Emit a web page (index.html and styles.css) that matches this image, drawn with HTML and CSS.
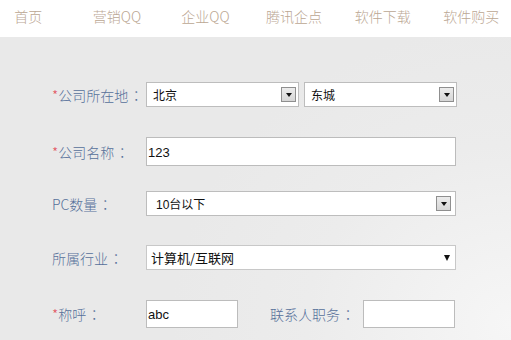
FILE: index.html
```html
<!DOCTYPE html>
<html lang="zh-CN">
<head>
<meta charset="utf-8">
<title>企业信息</title>
<link rel="stylesheet" href="styles.css">
</head>
<body>
<header class="top">
  <nav class="nav">
    <a class="nav-item">首页</a>
    <a class="nav-item">营销QQ</a>
    <a class="nav-item">企业QQ</a>
    <a class="nav-item">腾讯企点</a>
    <a class="nav-item">软件下载</a>
    <a class="nav-item">软件购买</a>
  </nav>
</header>
<main class="stage">
  <form class="form">
    <div class="row row-1">
      <label class="label"><span class="req">*</span>公司所在地<span class="colon">：</span></label>
      <div class="sel sel-half"><span class="sel-text">北京</span><span class="sel-btn"><span class="tri"></span></span></div>
      <div class="sel sel-half sel-second"><span class="sel-text">东城</span><span class="sel-btn"><span class="tri"></span></span></div>
    </div>
    <div class="row row-2">
      <label class="label"><span class="req">*</span>公司名称<span class="colon">：</span></label>
      <div class="inp inp-full"><span class="inp-text">123</span></div>
    </div>
    <div class="row row-3">
      <label class="label">PC数量<span class="colon">：</span></label>
      <div class="sel sel-full"><span class="sel-text sel-text-wide">10台以下</span><span class="sel-btn sel-btn-r"><span class="tri"></span></span></div>
    </div>
    <div class="row row-4">
      <label class="label">所属行业<span class="colon">：</span></label>
      <div class="msel"><span class="msel-text">计算机/互联网</span><span class="msel-arrow"></span></div>
    </div>
    <div class="row row-5">
      <label class="label"><span class="req">*</span>称呼<span class="colon">：</span></label>
      <div class="inp inp-small"><span class="inp-text">abc</span></div>
      <label class="label label-mid">联系人职务<span class="colon">：</span></label>
      <div class="inp inp-small"></div>
    </div>
  </form>
</main>
</body>
</html>
```
FILE: styles.css
```css
* { box-sizing: border-box; }
html, body { margin: 0; padding: 0; }
body {
  width: 511px;
  height: 340px;
  overflow: hidden;
  font-family: "Noto Sans CJK SC", "Liberation Sans", sans-serif;
  background: #e9e9e9;
}
.top {
  height: 37px;
  background: #ffffff;
}
.nav {
  display: grid;
  grid-template-columns: repeat(6, 88.6px);
  margin-left: -16px;
  height: 37px;
  align-items: center;
}
.nav-item {
  text-align: center;
  font-size: 14px;
  font-weight: 300;
  color: #bba793;
  line-height: 20px;
  padding-bottom: 5px;
}
.stage {
  height: 303px;
  background: radial-gradient(ellipse 340px 300px at 100% 95%, #f6f6f6 0%, #ececec 60%, #e9e9e9 100%);
  padding: 45px 0 0 52px;
}
.form { display: flex; flex-direction: column; }
.row { display: flex; align-items: center; }
.row-1 { height: 25px; }
.row-2 { height: 29px; margin-top: 30px; }
.row-3 { height: 25px; margin-top: 25px; }
.row-4 { height: 25px; margin-top: 29px; }
.row-5 { height: 28px; margin-top: 30px; }
.label {
  width: 94px;
  font-size: 14px;
  font-weight: 300;
  color: #56709a;
  line-height: 20px;
  white-space: nowrap;
}
.colon {
  font-family: "Noto Sans CJK TC", "Noto Sans CJK SC", sans-serif;
  display: inline-block;
  margin-left: 1px;
}
.req { color: #e2505c; }
.label-mid { width: 93px; margin-left: 32px; }

.sel {
  height: 25px;
  background: #fff;
  border: 1px solid #bdbdbd;
  display: flex;
  align-items: center;
  justify-content: space-between;
}
.sel-half { width: 153px; }
.sel-second { margin-left: 5px; }
.sel-full { width: 310px; }
.sel-text {
  font-size: 12px;
  color: #111;
  padding-left: 6px;
  font-family: "Liberation Sans", "Noto Sans CJK SC", sans-serif;
}
.sel-text-wide { padding-left: 9px; }
.sel-btn {
  width: 15px;
  height: 15px;
  margin-right: 2px;
  border: 1px solid #8f8f8f;
  background: linear-gradient(#ececec, #d6d6d6);
  display: flex;
  align-items: center;
  justify-content: center;
}
.sel-btn-r { margin-right: 4px; }
.tri {
  width: 0; height: 0;
  border-left: 3.5px solid transparent;
  border-right: 3.5px solid transparent;
  border-top: 4px solid #111;
}
.inp {
  height: 29px;
  background: #fff;
  border: 1px solid #bcbcbc;
  display: flex;
  align-items: center;
}
.inp-full { width: 310px; }
.inp-small { width: 92px; height: 28px; }
.inp-text {
  font-family: "Liberation Sans", Arial, sans-serif;
  font-size: 13px;
  color: #111;
  padding-left: 1px;
  line-height: 16px;
  padding-top: 2px;
}
.msel {
  width: 310px;
  height: 25px;
  background: #fff;
  border: 1px solid #c8c8c8;
  display: flex;
  align-items: center;
  justify-content: space-between;
}
.msel-text {
  font-size: 13px;
  color: #111;
  padding-left: 4px;
}
.msel-arrow {
  margin-right: 5px;
  width: 0; height: 0;
  border-left: 3px solid transparent;
  border-right: 3px solid transparent;
  border-top: 6px solid #111;
}
```
